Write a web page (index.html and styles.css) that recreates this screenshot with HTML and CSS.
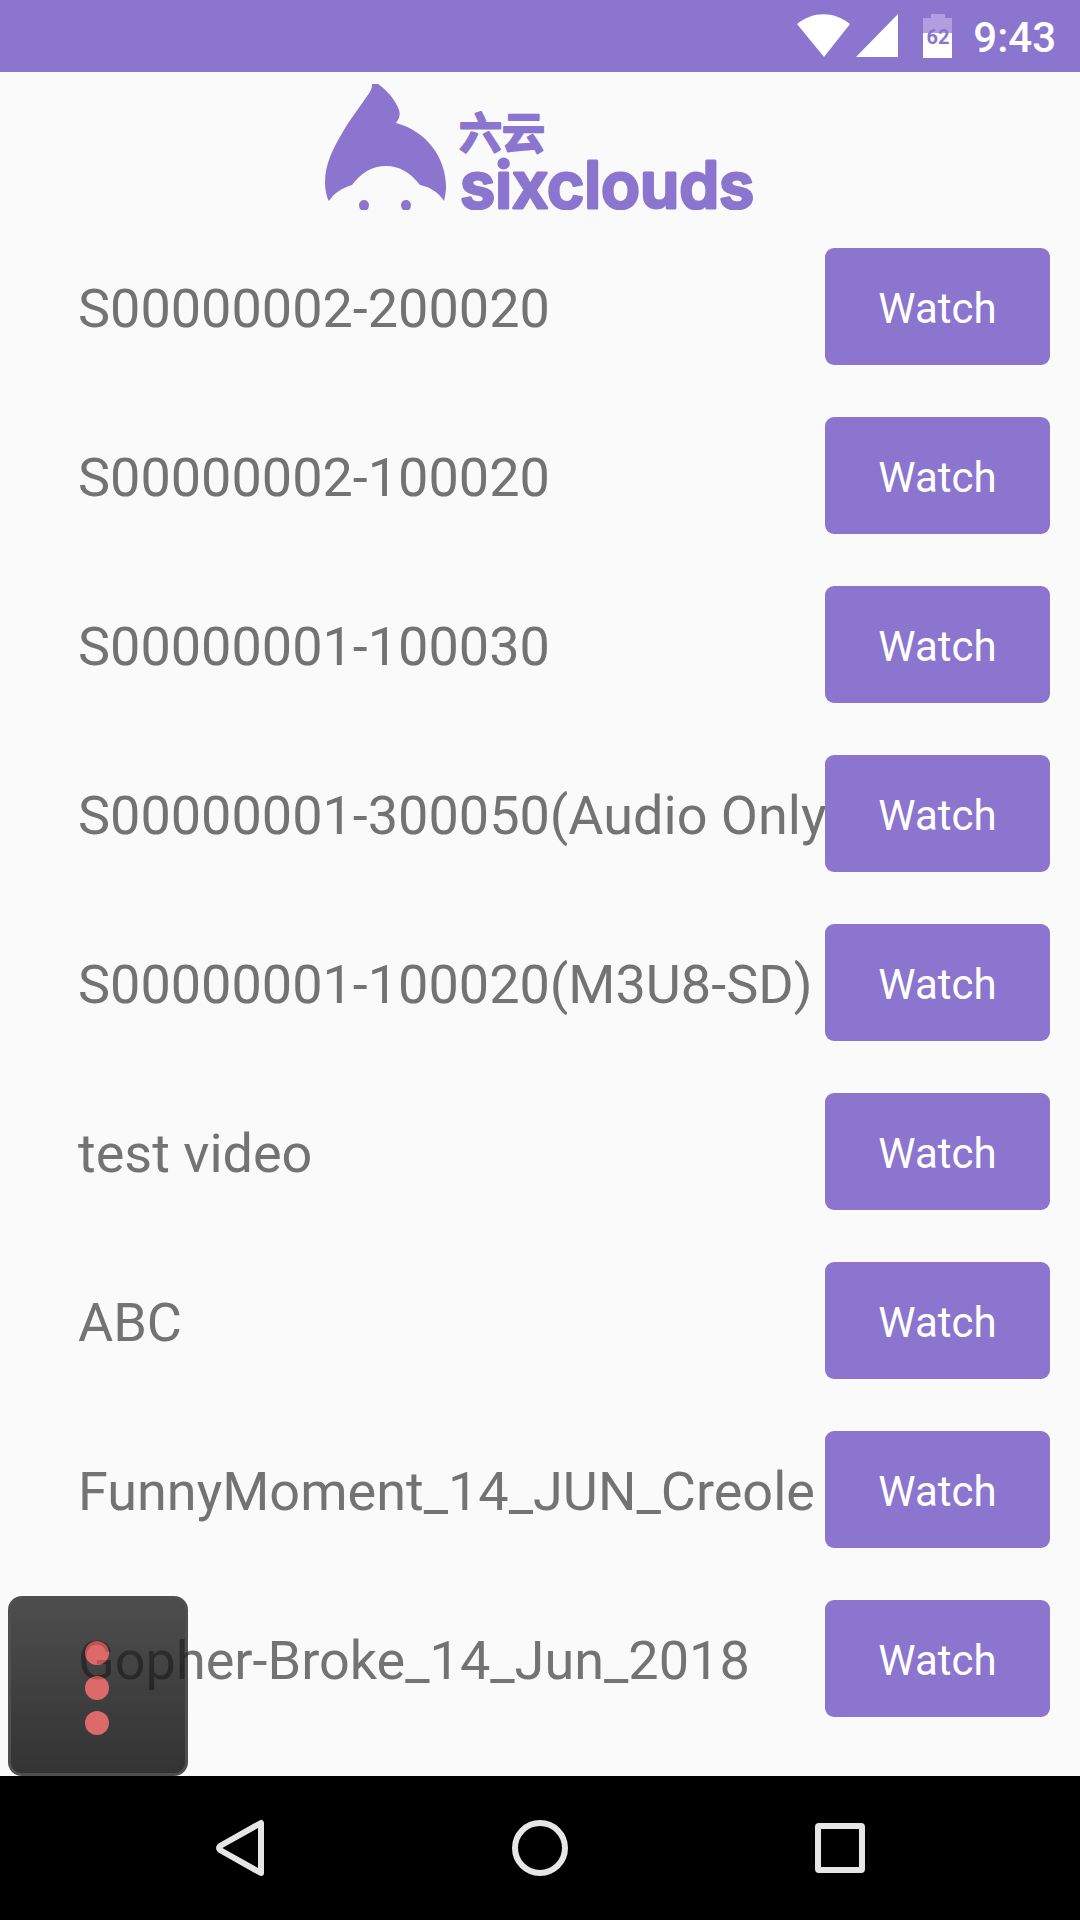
FILE: index.html
```html
<!DOCTYPE html>
<html lang="en">
<head>
<meta charset="utf-8">
<meta name="viewport" content="width=device-width, initial-scale=1">
<title>sixclouds</title>
<link rel="stylesheet" href="styles.css">
</head>
<body>
<div class="screen">
  <div class="status-bar">
    <svg class="signals" width="104" height="44" viewBox="0 0 104 44" fill="#fff" role="img" aria-label="Wi-Fi and mobile signal">
      <path d="M0 10C16-3 37-3 53 10L27 43z"/>
      <path d="M101 0V43H59z"/>
    </svg>
    <svg class="battery" width="30" height="44" viewBox="0 0 30 44" role="img" aria-label="Battery">
      <path d="M8 0H22V4H29V19H0V4H8z" fill="#af9fde"/>
      <path d="M0 19H29V44H0z" fill="#fff"/>
      <text class="battery-level" x="15" y="30" text-anchor="middle">62</text>
    </svg>
    <time class="clock">9:43</time>
  </div>

  <header class="header">
    <svg class="logo" width="430" height="126" viewBox="0 0 430 126" role="img" aria-label="sixclouds">
      <path d="M47 0H53C63 7 71 17 74 26C76 32 73 36 71 39C101 47 121 73 121 103C121 108 120 112 119 117C113 108 105 103 95 101C85 88 74 82 61 82C47 82 36 89 27 101C17 104 9 109 4 117C2 114 0 106 0 98C0 80 8 65 16 51C24 37 31 28 38 18C45 8 47 6 47 0z"/>
      <path d="M34 121a5 5 0 0 1 10 0q0 3-2 5h-6q-2-2-2-5zM76 121a5 5 0 0 1 10 0q0 3-2 5h-6q-2-2-2-5z"/>
      <text class="logo-cn" x="134" y="65">六云</text>
      <text class="logo-name" x="135" y="124">sixclouds</text>
    </svg>
  </header>

  <main class="content">
    <ul class="videos">
      <li class="video"><span class="title">S00000002-200020</span><button class="watch" type="button">Watch</button></li>
      <li class="video"><span class="title">S00000002-100020</span><button class="watch" type="button">Watch</button></li>
      <li class="video"><span class="title">S00000001-100030</span><button class="watch" type="button">Watch</button></li>
      <li class="video"><span class="title">S00000001-300050(Audio Only)</span><button class="watch" type="button">Watch</button></li>
      <li class="video"><span class="title">S00000001-100020(M3U8-SD)</span><button class="watch" type="button">Watch</button></li>
      <li class="video"><span class="title">test video</span><button class="watch" type="button">Watch</button></li>
      <li class="video"><span class="title">ABC</span><button class="watch" type="button">Watch</button></li>
      <li class="video"><span class="title">FunnyMoment_14_JUN_Creole</span><button class="watch" type="button">Watch</button></li>
      <li class="video"><span class="title">Gopher-Broke_14_Jun_2018</span><button class="watch" type="button">Watch</button></li>
    </ul>
    <button class="overlay" type="button" aria-label="More options">
      <span class="dot"></span><span class="dot"></span><span class="dot"></span>
    </button>
  </main>

  <nav class="nav-bar" aria-label="System">
    <button class="nav-button" type="button" aria-label="Back">
      <svg width="60" height="60" viewBox="0 0 60 60"><path d="M51 5V55L10 32Q8 30 10 28z"/></svg>
    </button>
    <button class="nav-button" type="button" aria-label="Home">
      <svg width="60" height="60" viewBox="0 0 60 60"><circle cx="30" cy="30" r="25"/></svg>
    </button>
    <button class="nav-button" type="button" aria-label="Recent apps">
      <svg width="60" height="60" viewBox="0 0 60 60"><rect x="8" y="8" width="44" height="44" rx="1"/></svg>
    </button>
  </nav>
</div>
</body>
</html>
```
FILE: styles.css
```css
* {
  box-sizing: border-box;
}

body {
  margin: 0;
  background: #fafafa;
  font-family: Roboto, "Noto Sans", sans-serif;
}

button {
  border: 0;
  padding: 0;
  font: inherit;
  cursor: pointer;
}

.screen {
  display: flex;
  flex-direction: column;
  min-height: 100vh;
}

/* Status bar */
.status-bar {
  display: flex;
  align-items: center;
  justify-content: flex-end;
  height: 72px;
  padding-right: 24px;
  background: #8b75cf;
  color: #fff;
}

.signals {
  margin-right: 22px;
}

.battery {
  margin-right: 20px;
}

.battery-level {
  fill: #8b75cf;
  font-size: 20px;
  font-weight: 700;
}

.clock {
  padding-top: 4px;
  font-size: 42px;
  font-weight: 500;
  line-height: 48px;
}

/* Logo */
.header {
  display: flex;
  justify-content: center;
  padding: 12px;
}

.logo {
  fill: #8b75cf;
}

.logo-cn,
.logo-name {
  stroke: #8b75cf;
  stroke-linejoin: round;
}

.logo-cn {
  font-family: "Noto Sans CJK SC", sans-serif;
  font-size: 43px;
  font-weight: 700;
  stroke-width: 2px;
}

.logo-name {
  font-family: Inter, sans-serif;
  font-size: 64px;
  font-weight: 600;
  stroke-width: 3px;
}

/* Video list */
.content {
  position: relative;
  flex: 1;
}

.videos {
  margin: 0;
  padding: 0;
  list-style: none;
}

.video {
  display: flex;
  align-items: center;
  height: 169px;
  padding: 0 30px 0 78px;
}

.title {
  flex: 1;
  min-width: 0;
  padding-top: 5px;
  overflow: hidden;
  color: #737373;
  font-size: 54px;
  line-height: 64px;
  text-rendering: optimizeSpeed;
  white-space: nowrap;
}

.watch {
  flex: none;
  width: 225px;
  height: 117px;
  padding-top: 4px;
  border-radius: 9px;
  background: #8b75cf;
  color: #fff;
  font-size: 42px;
}

/* Floating menu button, see-through over the list */
.overlay {
  position: absolute;
  left: 8px;
  bottom: 0;
  display: flex;
  flex-direction: column;
  align-items: center;
  justify-content: center;
  gap: 11px;
  width: 180px;
  height: 180px;
  padding: 3px 2px 0 0;
  border: 3px solid #282828;
  border-radius: 14px;
  background: linear-gradient(#262626, #060606);
  opacity: 0.81;
}

.dot {
  width: 24px;
  height: 24px;
  border-radius: 50%;
  background: #d64949;
}

/* Navigation bar */
.nav-bar {
  display: flex;
  justify-content: center;
  gap: 240px;
  height: 144px;
  background: #000;
}

.nav-button {
  display: flex;
  align-items: center;
  background: none;
}

.nav-button svg {
  fill: none;
  stroke: #e6e6e6;
  stroke-width: 6px;
  stroke-linejoin: round;
}
```
